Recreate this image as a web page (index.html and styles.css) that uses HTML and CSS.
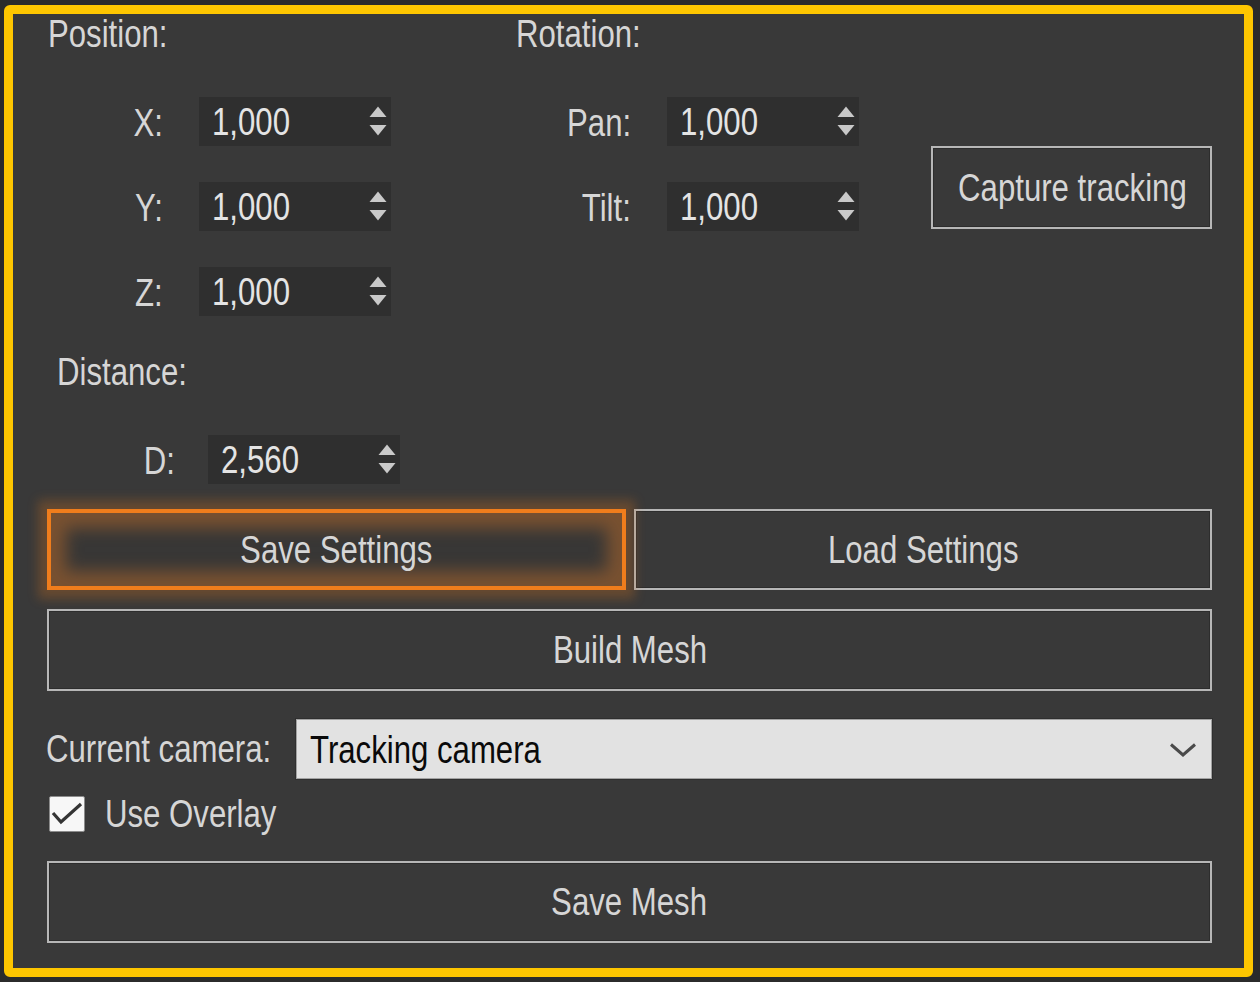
FILE: index.html
```html
<!DOCTYPE html>
<html>
<head>
<meta charset="utf-8">
<link rel="stylesheet" href="styles.css">
</head>
<body>
<div class="frame">
  <div class="top">
    <div class="col col-pos">
      <div class="heading"><span class="t tl">Position:</span></div>
      <div class="rows">
        <div class="row"><span class="lbl"><span class="t tr">X:</span></span><div class="num"><span class="t tl">1,000</span><svg class="spin" width="18" height="30" viewBox="0 0 18 30"><polygon points="0.5,11 9,0.5 17.5,11"/><polygon points="0.5,19 17.5,19 9,29.5"/></svg></div></div>
        <div class="row"><span class="lbl"><span class="t tr">Y:</span></span><div class="num"><span class="t tl">1,000</span><svg class="spin" width="18" height="30" viewBox="0 0 18 30"><polygon points="0.5,11 9,0.5 17.5,11"/><polygon points="0.5,19 17.5,19 9,29.5"/></svg></div></div>
        <div class="row"><span class="lbl"><span class="t tr">Z:</span></span><div class="num"><span class="t tl">1,000</span><svg class="spin" width="18" height="30" viewBox="0 0 18 30"><polygon points="0.5,11 9,0.5 17.5,11"/><polygon points="0.5,19 17.5,19 9,29.5"/></svg></div></div>
      </div>
    </div>
    <div class="col col-rot">
      <div class="heading"><span class="t tl">Rotation:</span></div>
      <div class="rows">
        <div class="row"><span class="lbl"><span class="t tr">Pan:</span></span><div class="num"><span class="t tl">1,000</span><svg class="spin" width="18" height="30" viewBox="0 0 18 30"><polygon points="0.5,11 9,0.5 17.5,11"/><polygon points="0.5,19 17.5,19 9,29.5"/></svg></div></div>
        <div class="row"><span class="lbl"><span class="t tr">Tilt:</span></span><div class="num"><span class="t tl">1,000</span><svg class="spin" width="18" height="30" viewBox="0 0 18 30"><polygon points="0.5,11 9,0.5 17.5,11"/><polygon points="0.5,19 17.5,19 9,29.5"/></svg></div></div>
      </div>
    </div>
    <div class="col col-cap">
      <button class="btn capture"><span class="t">Capture tracking</span></button>
    </div>
  </div>

  <div class="distance">
    <div class="heading"><span class="t tl">Distance:</span></div>
    <div class="row drow"><span class="lbl"><span class="t tr">D:</span></span><div class="num"><span class="t tl">2,560</span><svg class="spin" width="18" height="30" viewBox="0 0 18 30"><polygon points="0.5,11 9,0.5 17.5,11"/><polygon points="0.5,19 17.5,19 9,29.5"/></svg></div></div>
  </div>

  <div class="btnrow">
    <button class="btn save"><span class="t">Save Settings</span></button>
    <button class="btn load"><span class="t">Load Settings</span></button>
  </div>
  <button class="btn wide build"><span class="t">Build Mesh</span></button>

  <div class="camrow">
    <span class="camlbl"><span class="t tl">Current camera:</span></span>
    <div class="combo"><span class="t tl">Tracking camera</span><svg class="chev" width="28" height="16" viewBox="0 0 28 16"><polyline points="2,2.5 14,13 26,2.5"/></svg></div>
  </div>

  <div class="chkrow">
    <svg class="chk" width="36" height="36" viewBox="0 0 36 36"><rect x="0.5" y="0.5" width="35" height="35" rx="1.5"/><polyline points="4,17 12,26 32,8"/></svg>
    <span class="chklbl"><span class="t tl">Use Overlay</span></span>
  </div>

  <button class="btn wide savemesh"><span class="t">Save Mesh</span></button>
</div>
</body>
</html>
```

FILE: styles.css
```css
* { box-sizing: border-box; }

html, body {
  margin: 0;
  padding: 0;
  background: #2b2b2b;
}

body {
  font-family: "Liberation Sans", Arial, sans-serif;
  font-size: 38px;
  color: #d6d6d6;
}

/* condensed rendering of the classic UI font */
.t {
  display: inline-block;
  white-space: nowrap;
  transform: scaleX(0.82);
  transform-origin: center;
}
.t.tl { transform-origin: left center; }
.t.tr { transform-origin: right center; }

.frame {
  margin: 5px 0 0 4px;
  width: 1249px;
  height: 972px;
  border: 9px solid #fec600;
  border-radius: 6px;
  background: #393939;
  padding: 0 32px 0 34px;
  display: flex;
  flex-direction: column;
}

.top {
  display: grid;
  grid-template-columns: 469px 415px 281px;
}

.col {
  display: flex;
  flex-direction: column;
}

.heading {
  line-height: 40px;
  height: 40px;
  white-space: nowrap;
}

.col-pos .heading { margin-left: 1px; }

.rows {
  margin-top: 43px;
  display: flex;
  flex-direction: column;
  gap: 36px;
}

.row {
  display: flex;
  align-items: center;
  height: 49px;
}

.lbl {
  display: block;
  text-align: right;
  line-height: 49px;
  padding-top: 3px;
  white-space: nowrap;
}

.col-pos .lbl { width: 116px; margin-right: 36px; }
.col-rot .lbl { width: 115px; margin-right: 36px; }

.num {
  width: 192px;
  height: 49px;
  background: #2f2f2f;
  display: flex;
  align-items: center;
  justify-content: space-between;
  padding: 0 4px 0 13px;
  line-height: 49px;
  color: #e4e4e4;
}

.num .t { padding-top: 2px; }

.spin {
  display: block;
  align-self: flex-start;
  margin-top: 9px;
}

.spin polygon { fill: #c9c9c9; }

.col-cap { padding-top: 132px; }

.btn {
  font-family: inherit;
  font-size: 38px;
  color: #d6d6d6;
  background: #393939;
  border: 2px solid #b7b7b7;
  box-shadow: inset 0 0 0 1px #2d2d2d;
  border-radius: 0;
  padding: 0;
  margin: 0;
  line-height: 1;
  white-space: nowrap;
  text-align: center;
}

.capture {
  width: 281px;
  height: 83px;
}

.distance {
  margin-top: 36px;
  padding-left: 10px;
}

.drow {
  margin-top: 43px;
  margin-left: -10px;
}

.drow .lbl { width: 128px; margin-right: 33px; }

.btnrow {
  margin-top: 25px;
  display: flex;
  gap: 8px;
  height: 81px;
}

.save {
  width: 579px;
  height: 81px;
  border: 4px solid #f07d1c;
  background: #383736;
  box-shadow: 0 0 10px 9px rgba(200, 110, 30, 0.32), inset 0 0 16px 15px rgba(180, 105, 45, 0.52);
  position: relative;
  z-index: 1;
}

.load {
  flex: 1;
  height: 81px;
}

.wide {
  width: 100%;
  height: 82px;
  display: block;
}

.build { margin-top: 19px; }

.camrow {
  margin-top: 28px;
  display: flex;
  align-items: center;
  height: 60px;
}

.camlbl {
  margin-left: -1px;
  width: 250px;
  white-space: nowrap;
}

.combo {
  flex: 1;
  height: 60px;
  background: #e2e2e2;
  border: 1px solid #a2a2a2;
  box-shadow: 0 0 0 1px #2f2f2f;
  display: flex;
  align-items: center;
  justify-content: space-between;
  padding: 0 14px 0 13px;
  color: #0a0a0a;
}

.combo .t { padding-top: 2px; }

.chev {
  display: block;
  margin-top: 2px;
}

.chev polyline {
  fill: none;
  stroke: #4a4a4a;
  stroke-width: 3;
}

.chkrow {
  margin-top: 17px;
  height: 36px;
  display: flex;
  align-items: center;
}

.chk {
  display: block;
  margin-left: 2px;
}

.chk rect {
  fill: #f7f7f7;
  stroke: #8c8c8c;
  stroke-width: 1;
}

.chk polyline {
  fill: none;
  stroke: #343434;
  stroke-width: 3.2;
}

.chklbl {
  margin-left: 20px;
  white-space: nowrap;
}

.savemesh { margin-top: 29px; }
```
